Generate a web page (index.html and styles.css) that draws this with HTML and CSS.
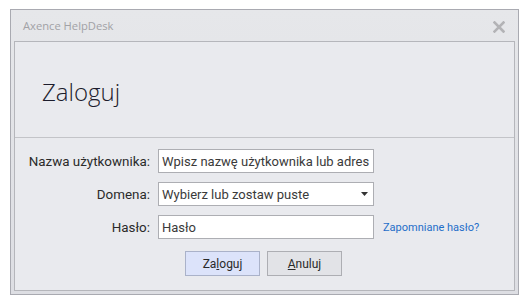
FILE: index.html
```html
<!DOCTYPE html>
<html lang="pl">
<head>
    <meta charset="UTF-8">
    <meta name="viewport" content="width=device-width, initial-scale=1.0">
    <title>Axence HelpDesk</title>
    <link rel="stylesheet" href="styles.css">
</head>
<body>
    <div class="window">
        <div class="titlebar">
            <span class="title">Axence HelpDesk</span>
            <svg class="close" width="12" height="12" viewBox="0 0 12 12">
                <path d="M1.5 1.5 L10.5 10.5 M10.5 1.5 L1.5 10.5" stroke="#b3b3b6" stroke-width="2.6" stroke-linecap="square"/>
            </svg>
        </div>

        <div class="panel">
            <div class="header">
                <h1>Zaloguj</h1>
            </div>

            <div class="form">
                <div class="fields">
                    <label for="user">Nazwa użytkownika:</label>
                    <input type="text" id="user" value="Wpisz nazwę użytkownika lub adres e-mail">
                    <span></span>

                    <label for="domain">Domena:</label>
                    <div class="select" id="domain">
                        <span>Wybierz lub zostaw puste</span>
                        <svg width="7" height="4" viewBox="0 0 7 4"><path d="M0 0 H7 L3.5 4 Z" fill="#333"/></svg>
                    </div>
                    <span></span>

                    <label for="pass">Hasło:</label>
                    <input type="text" id="pass" value="Hasło">
                    <a href="#" class="forgot">Zapomniane hasło?</a>
                </div>

                <div class="buttons">
                    <button class="primary">Za<u>l</u>oguj</button>
                    <button><u>A</u>nuluj</button>
                </div>
            </div>
        </div>
    </div>
</body>
</html>
```

FILE: styles.css
```css
body {
    margin: 0;
    padding: 9px 0 0 10px;
    background-color: #ffffff;
    font-family: Roboto, "Liberation Sans", sans-serif;
}

.window {
    width: 501px;
    padding: 0 3px 3px 3px;
    border: 1px solid #a9aab1;
    background: linear-gradient(#e6e7ea, #dddee3);
}

.titlebar {
    height: 31px;
    display: flex;
    align-items: center;
    justify-content: space-between;
    padding: 0 10px 0 9px;
}

.title {
    font-family: "Open Sans", sans-serif;
    font-size: 11.2px;
    color: #a2a2a6;
}

.close {
    margin-top: 2px;
}

.panel {
    border: 1px solid #b5b6bb;
    background-color: #e9eaee;
}

.header {
    height: 95px;
    display: flex;
    align-items: center;
    padding-left: 27px;
    border-bottom: 1px solid #c3c4c8;
}

.header h1 {
    margin: 3px 0 0 0;
    font-family: "Open Sans", sans-serif;
    font-weight: 300;
    font-size: 24px;
    color: #1c1c2c;
}

.form {
    padding: 11px 0 14px 0;
}

.fields {
    display: grid;
    grid-template-columns: 135px 216px auto;
    column-gap: 8px;
    row-gap: 9px;
    align-items: center;
}

.fields label {
    text-align: right;
    font-size: 13.4px;
    color: #2a2a2a;
}

.fields input,
.select {
    box-sizing: border-box;
    width: 216px;
    height: 24px;
    margin: 0;
    padding: 0 3px;
    border: 1px solid #adaeb3;
    background-color: #ffffff;
    font-family: Roboto, sans-serif;
    font-size: 13px;
    color: #3a3a3a;
    outline: none;
}

.select {
    display: flex;
    align-items: center;
    justify-content: space-between;
    padding-right: 5px;
}

.forgot {
    margin-left: 1px;
    font-size: 11px;
    color: #1f6ec9;
    text-decoration: none;
}

.buttons {
    display: flex;
    justify-content: center;
    gap: 7px;
    margin-top: 12px;
    padding-right: 2px;
}

.buttons button {
    width: 75px;
    height: 25px;
    border: 1px solid #adaeb3;
    background-color: #e2e3e7;
    font-family: Roboto, sans-serif;
    font-size: 12px;
    color: #2a2a2a;
    padding: 0;
}

.buttons button.primary {
    background-color: #dce3fa;
    border-color: #aab2c9;
}
```
